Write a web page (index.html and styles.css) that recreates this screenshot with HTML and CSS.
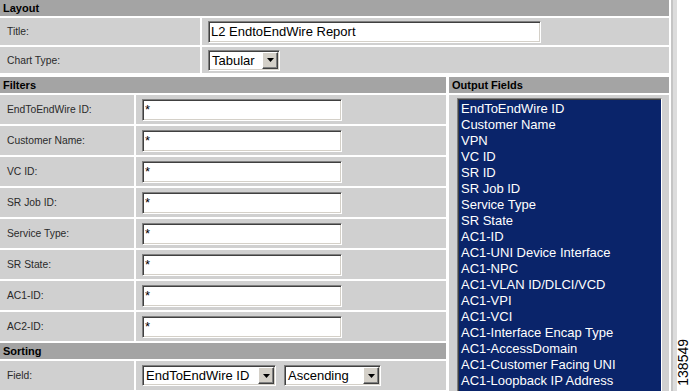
FILE: index.html
```html
<!DOCTYPE html>
<html>
<head>
    <title>L2 EndtoEndWire Report</title>
    <link rel="stylesheet" href="styles.css">
</head>
<body>
<div class="page">
    <div class="form">
        <!-- Layout -->
        <div class="section">
            <div class="head">Layout</div>
            <div class="row row-title">
                <div class="label wide">Title:</div>
                <div class="value"><input type="text" class="text title-input" value="L2 EndtoEndWire Report"></div>
            </div>
            <div class="row row-chart">
                <div class="label wide">Chart Type:</div>
                <div class="value">
                    <div class="select sel-chart">
                        <span class="sel-text">Tabular</span>
                        <span class="sel-btn"><svg width="7" height="4" viewBox="0 0 7 4"><path d="M0 0h7L3.5 4z"/></svg></span>
                    </div>
                </div>
            </div>
        </div>

        <div class="columns">
            <!-- Filters + Sorting -->
            <div class="col-left">
                <div class="head">Filters</div>
                <div class="row">
                    <div class="label">EndToEndWire ID:</div>
                    <div class="value"><input type="text" class="text" value="*"></div>
                </div>
                <div class="row">
                    <div class="label">Customer Name:</div>
                    <div class="value"><input type="text" class="text" value="*"></div>
                </div>
                <div class="row">
                    <div class="label">VC ID:</div>
                    <div class="value"><input type="text" class="text" value="*"></div>
                </div>
                <div class="row">
                    <div class="label">SR Job ID:</div>
                    <div class="value"><input type="text" class="text" value="*"></div>
                </div>
                <div class="row">
                    <div class="label">Service Type:</div>
                    <div class="value"><input type="text" class="text" value="*"></div>
                </div>
                <div class="row">
                    <div class="label">SR State:</div>
                    <div class="value"><input type="text" class="text" value="*"></div>
                </div>
                <div class="row">
                    <div class="label">AC1-ID:</div>
                    <div class="value"><input type="text" class="text" value="*"></div>
                </div>
                <div class="row">
                    <div class="label">AC2-ID:</div>
                    <div class="value"><input type="text" class="text" value="*"></div>
                </div>

                <div class="head">Sorting</div>
                <div class="row">
                    <div class="label">Field:</div>
                    <div class="value">
                        <div class="select sel-field">
                            <span class="sel-text">EndToEndWire ID</span>
                            <span class="sel-btn"><svg width="7" height="4" viewBox="0 0 7 4"><path d="M0 0h7L3.5 4z"/></svg></span>
                        </div>
                        <div class="select sel-order">
                            <span class="sel-text">Ascending</span>
                            <span class="sel-btn"><svg width="7" height="4" viewBox="0 0 7 4"><path d="M0 0h7L3.5 4z"/></svg></span>
                        </div>
                    </div>
                </div>
            </div>

            <!-- Output Fields -->
            <div class="col-right">
                <div class="head">Output Fields</div>
                <div class="panel">
                    <div class="listbox">
                        <div>EndToEndWire ID</div>
                        <div>Customer Name</div>
                        <div>VPN</div>
                        <div>VC ID</div>
                        <div>SR ID</div>
                        <div>SR Job ID</div>
                        <div>Service Type</div>
                        <div>SR State</div>
                        <div>AC1-ID</div>
                        <div>AC1-UNI Device Interface</div>
                        <div>AC1-NPC</div>
                        <div>AC1-VLAN ID/DLCI/VCD</div>
                        <div>AC1-VPI</div>
                        <div>AC1-VCI</div>
                        <div>AC1-Interface Encap Type</div>
                        <div>AC1-AccessDomain</div>
                        <div>AC1-Customer Facing UNI</div>
                        <div>AC1-Loopback IP Address</div>
                    </div>
                </div>
            </div>
        </div>
    </div>
    <div class="edge"></div>
    <div class="figno"><span>138549</span></div>
</div>
</body>
</html>
```

FILE: styles.css
```css
body {
    margin: 0;
    background-color: #fff;
    font-family: "Liberation Sans", Arial, sans-serif;
    color: #000;
}

.page {
    display: flex;
    height: 391px;
    overflow: hidden;
}

.form {
    width: 669px;
    display: flex;
    flex-direction: column;
}

.section {
    display: flex;
    flex-direction: column;
    gap: 2px;
}

.head {
    height: 16px;
    line-height: 16px;
    background-color: #a4a4a4;
    font-size: 11px;
    font-weight: bold;
    padding-left: 3px;
}

.row {
    display: flex;
    gap: 2px;
    height: 29px;
}

.row-title {
    height: 27px;
}

.row-chart {
    height: 26px;
}

.label {
    width: 127px;
    padding-left: 7px;
    background-color: #d0d0d0;
    display: flex;
    align-items: center;
    font-size: 10.3px;
    color: #2a2a2a;
}

.label.wide {
    width: 193px;
}

.value {
    flex: 1;
    background-color: #d0d0d0;
    display: flex;
    align-items: center;
    padding-left: 6px;
    gap: 8px;
}

/* classic sunken fields */
input.text {
    box-sizing: border-box;
    width: 200px;
    height: 22px;
    margin: 0;
    padding: 0 2px;
    font-family: "Liberation Sans", Arial, sans-serif;
    font-size: 13px;
    color: #000;
    background-color: #fff;
    border: 1px solid;
    border-color: #808080 #fff #fff #808080;
    box-shadow: inset 1px 1px #404040, inset -1px -1px #d4d0c8;
    outline: none;
}

input.title-input {
    width: 333px;
}

.select {
    box-sizing: border-box;
    height: 21px;
    display: flex;
    background-color: #fff;
    border: 1px solid;
    border-color: #808080 #fff #fff #808080;
    box-shadow: inset 1px 1px #404040, inset -1px -1px #d4d0c8;
    padding: 1px;
    font-size: 13px;
}

.sel-text {
    flex: 1;
    padding-left: 2px;
    line-height: 17px;
    white-space: nowrap;
    overflow: hidden;
}

.sel-btn {
    box-sizing: border-box;
    width: 16px;
    background-color: #d4d0c8;
    border: 1px solid;
    border-color: #fff #404040 #404040 #fff;
    box-shadow: inset -1px -1px #808080;
    display: flex;
    align-items: center;
    justify-content: center;
}

.sel-chart {
    width: 72px;
}

.sel-field {
    width: 134px;
}

.sel-order {
    width: 97px;
}

.columns {
    display: flex;
    gap: 3px;
    margin-top: 4px;
    flex: 1;
}

.col-left {
    width: 446px;
    display: flex;
    flex-direction: column;
    gap: 2px;
}

.col-right {
    flex: 1;
    display: flex;
    flex-direction: column;
    gap: 2px;
}

.panel {
    flex: 1;
    background-color: #d0d0d0;
    padding: 3px 0 0 8px;
}

.listbox {
    box-sizing: border-box;
    width: 205px;
    height: 320px;
    padding: 2px 3px;
    background-color: #0a246a;
    border: 1px solid;
    border-color: #808080 #fff #fff #808080;
    box-shadow: inset 1px 1px #404040;
    color: #fff;
    font-size: 13px;
    line-height: 16px;
    white-space: nowrap;
}

.edge {
    box-sizing: border-box;
    width: 6px;
    margin-left: 2px;
    background-color: #dcdcdc;
    border-left: 2px solid #c4c4c4;
}

.figno {
    flex: 1;
    display: flex;
    align-items: flex-end;
    justify-content: center;
    padding-bottom: 5px;
}

.figno span {
    writing-mode: vertical-rl;
    transform: rotate(180deg);
    font-size: 14px;
    line-height: 13px;
}
```
